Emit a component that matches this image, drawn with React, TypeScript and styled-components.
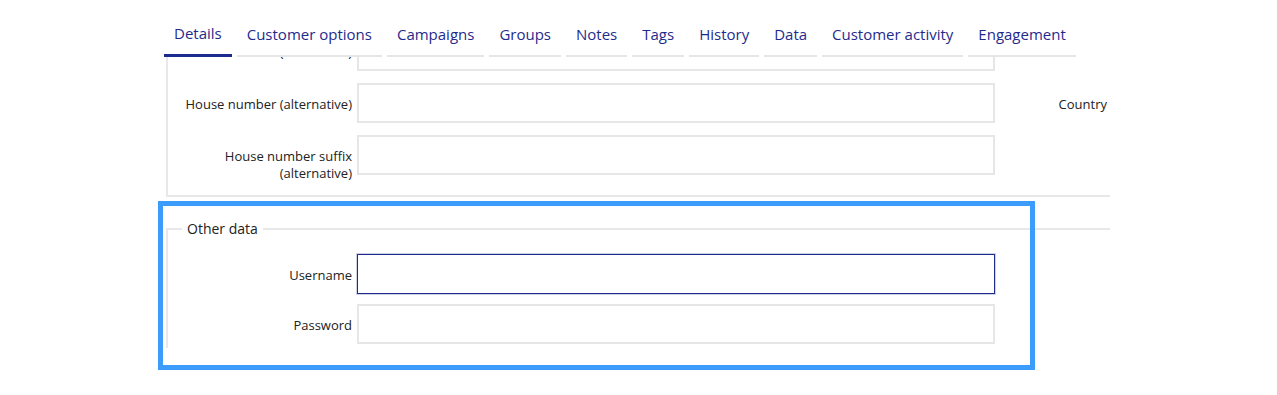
import React, { useLayoutEffect, useRef } from 'react'
import styled, { createGlobalStyle } from 'styled-components'

const GlobalStyle = createGlobalStyle`
  html, body {
    margin: 0;
    background: #ffffff;
  }
  body {
    font-family: "Open Sans", "Liberation Sans", sans-serif;
  }
`

const Page = styled.div`
  position: relative;
  width: 1277px;
  height: 395px;
  padding-left: 164px;
  box-sizing: border-box;
  overflow: hidden;
`

const TabBar = styled.div`
  display: flex;
  align-items: flex-end;
  height: 57px;
`

const Tab = styled.div<{ $active?: boolean }>`
  padding: 23px 10px 10px;
  margin-right: 5px;
  font-size: 15px;
  line-height: 22px;
  color: #1f2b8c;
  white-space: nowrap;
  border-bottom: ${p => (p.$active ? '3px solid #1b2a8e' : '2px solid #e6e6e6')};
`

const Viewport = styled.div`
  width: 946px;
  height: 291px;
  overflow: hidden;
`

const Fieldset = styled.fieldset<{ $gap?: number }>`
  width: 1200px;
  margin: 0 0 ${p => p.$gap ?? 0}px 2px;
  padding: 0 8px 13px;
  border: 2px solid #e8e8e8;
  box-sizing: border-box;
`

const Legend = styled.legend`
  margin-left: 6px;
  padding: 0 5px;
  font-size: 14px;
  line-height: 20px;
  color: #222222;
`

const Grid = styled.div<{ $top?: number; $rowGap?: number }>`
  display: grid;
  grid-template-columns: 176px 638px 107px 638px;
  column-gap: 5px;
  row-gap: ${p => p.$rowGap ?? 12}px;
  padding-top: ${p => p.$top ?? 0}px;
`

const Label = styled.label`
  padding-top: 13px;
  font-size: 13px;
  line-height: 17px;
  color: #222222;
  text-align: right;
`

const Input = styled.div<{ $focused?: boolean }>`
  height: 40px;
  box-sizing: border-box;
  border: ${p => (p.$focused ? '1px solid #1f2b8c' : '2px solid #e6e6e6')};
  box-shadow: ${p => (p.$focused ? '0 0 0 1px #cfd1e6' : 'none')};
  background: #ffffff;
`

const Empty = styled.div``

const Highlight = styled.div`
  position: absolute;
  left: 158px;
  top: 201px;
  width: 877px;
  height: 169px;
  box-sizing: border-box;
  border: 5px solid #3b9cfc;
  pointer-events: none;
`

const tabs = [
  'Details',
  'Customer options',
  'Campaigns',
  'Groups',
  'Notes',
  'Tags',
  'History',
  'Data',
  'Customer activity',
  'Engagement',
]

const addressRows = [
  ['Street (alternative)', 'Postal code'],
  ['Address 2 (alternative)', 'City'],
  ['Address 3 (alternative)', 'State'],
  ['House number (alternative)', 'Country'],
  ['House number suffix (alternative)', ''],
]

const App = () => {
  const scrollRef = useRef<HTMLDivElement>(null)

  // the form is scrolled down, only the last rows of the address block are visible
  useLayoutEffect(() => {
    if (scrollRef.current) scrollRef.current.scrollTop = 156
  }, [])

  return (
    <Page>
      <GlobalStyle />
      <TabBar>
        {tabs.map((t, i) => (
          <Tab key={t} $active={i === 0}>
            {t}
          </Tab>
        ))}
      </TabBar>

      <Viewport ref={scrollRef}>
        <Fieldset $gap={22}>
          <Grid $top={24}>
            {addressRows.map(([left, right]) => (
              <React.Fragment key={left}>
                <Label>{left}</Label>
                <Input />
                <Label>{right}</Label>
                {right ? <Input /> : <Empty />}
              </React.Fragment>
            ))}
          </Grid>
        </Fieldset>

        <Fieldset>
          <Legend>Other data</Legend>
          <Grid $top={15} $rowGap={10}>
            <Label>Username</Label>
            <Input $focused />
            <Empty />
            <Empty />
            <Label>Password</Label>
            <Input />
            <Empty />
            <Empty />
          </Grid>
        </Fieldset>
      </Viewport>

      <Highlight />
    </Page>
  )
}

export default App
